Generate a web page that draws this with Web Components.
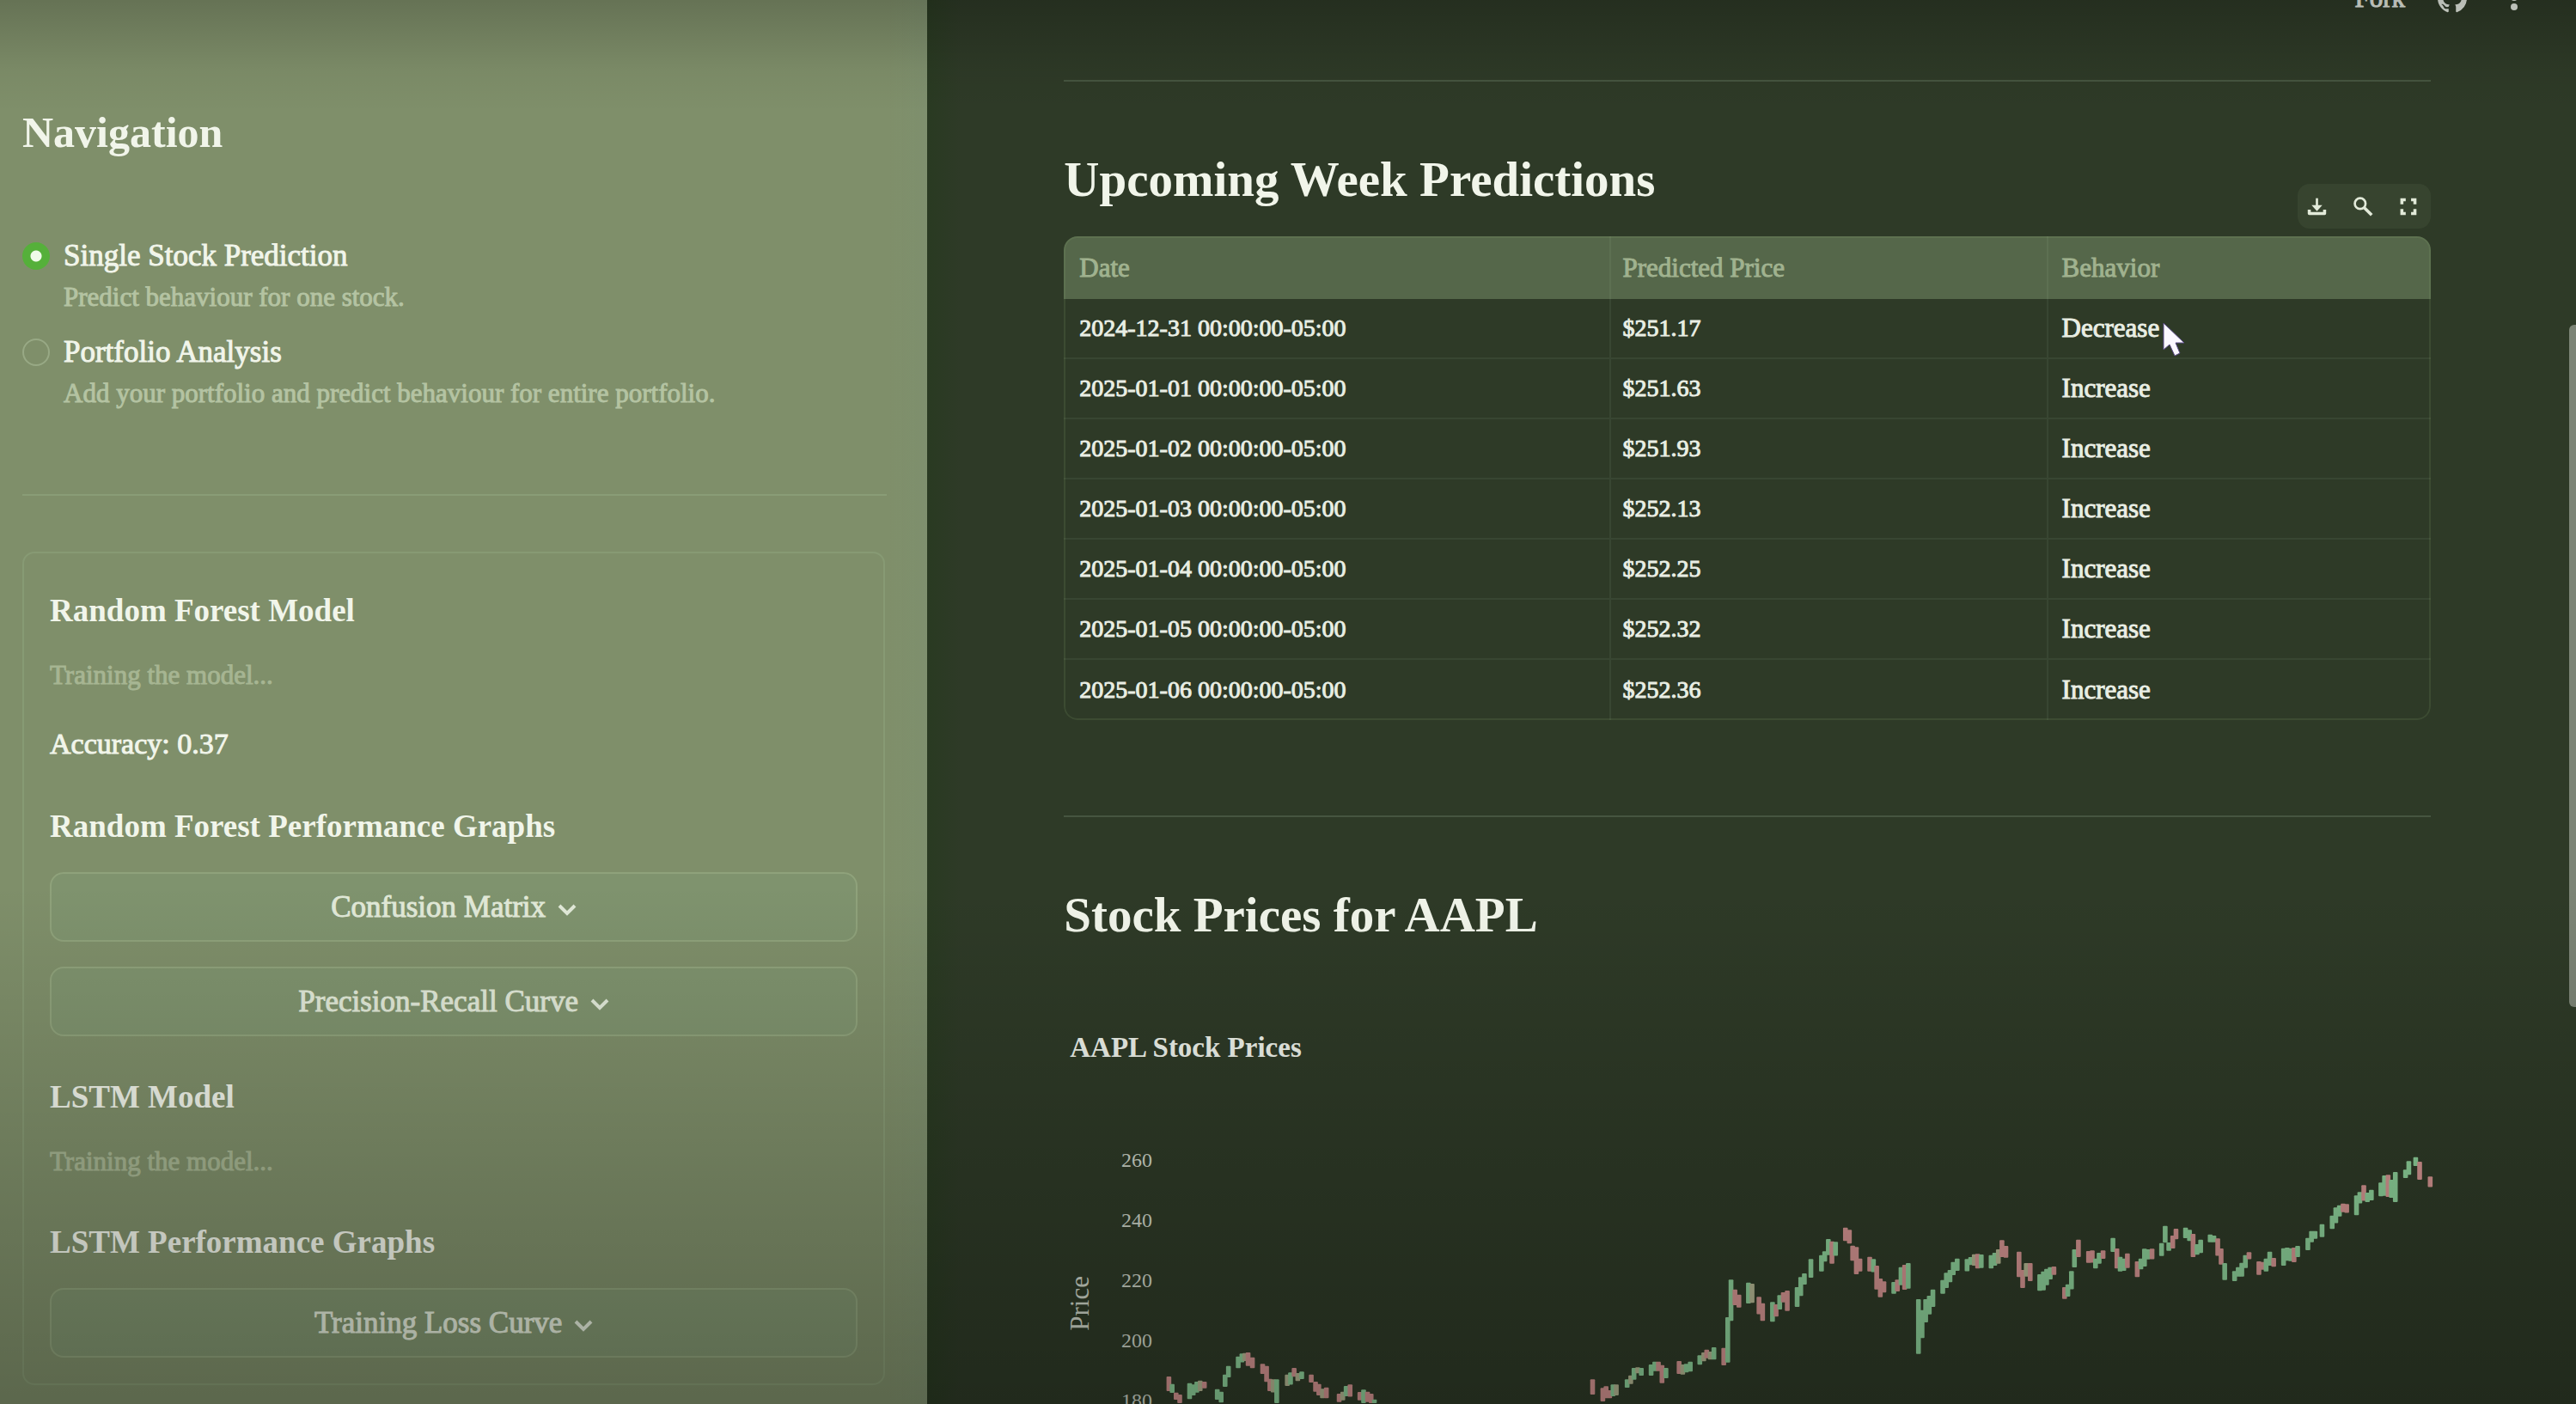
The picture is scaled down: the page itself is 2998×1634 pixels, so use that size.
<!DOCTYPE html>
<html lang="en">
<head>
<meta charset="utf-8">
<title>Stock Prediction</title>
<style>
  :root {
    --text: #f1f5ea;
    --soft: #e1e9d8;
    --muted: #b4c3a2;
    --side: #7f8f6a;
    --main: #2e3a27;
    --side-line: #899d76;
    --main-line: #465540;
  }
  html, body { margin: 0; height: 100%; background: var(--main); }
  body { font-family: "Liberation Serif", "Times New Roman", serif; color: var(--text); -webkit-text-stroke: 1px; }
  h2, h3 { -webkit-text-stroke: 0; }
</style>
</head>
<body>
<app-shell>
  <side-panel slot="side">
    <page-choice></page-choice>
    <model-card>
      <h3>Random Forest Model</h3>
      <p class="note">Training the model...</p>
      <p>Accuracy: 0.37</p>
      <h3>Random Forest Performance Graphs</h3>
      <pop-button>Confusion Matrix</pop-button>
      <pop-button>Precision-Recall Curve</pop-button>
      <h3>LSTM Model</h3>
      <p class="note">Training the model...</p>
      <h3>LSTM Performance Graphs</h3>
      <pop-button>Training Loss Curve</pop-button>
    </model-card>
  </side-panel>
  <top-bar></top-bar>
  <page-section>
    <h2 slot="title">Upcoming Week Predictions</h2>
    <table-tools slot="tools"></table-tools>
    <prediction-table></prediction-table>
  </page-section>
  <page-section>
    <h2 slot="title">Stock Prices for AAPL</h2>
    <price-chart></price-chart>
  </page-section>
</app-shell>

<script>
const define = (name, html, setup) => {
  const tpl = document.createElement('template');
  tpl.innerHTML = html;
  customElements.define(name, class extends HTMLElement {
    constructor() {
      super();
      const root = this.attachShadow({ mode: 'open' });
      root.append(tpl.content.cloneNode(true));
      if (setup) setup(root, this);
    }
  });
};

define('app-shell', `
<style>
  :host { display: grid; grid-template-columns: 36% 1fr; height: 100vh; overflow: hidden; position: relative; }
  aside { background: linear-gradient(to right, transparent 96%, rgba(120,145,125,.18)), var(--side); overflow: hidden; }
  main { background: linear-gradient(to right, rgba(38,58,30,.6), transparent 2%), var(--main); overflow: hidden; min-width: 0; }
  .shade { position: absolute; inset: 0; pointer-events: none;
    background: linear-gradient(to bottom, rgba(0,0,0,.2), rgba(0,0,0,.04) 5%, transparent 8%, transparent 63%, rgba(0,0,0,.28)); }
  .thumb { position: absolute; right: 0; top: 378px; width: 8px; height: 794px; border-radius: 6px 0 0 6px; background: #7c8476; }
  .pointer { position: absolute; left: 2516px; top: 374px; width: 28px; height: 42px; }
</style>
<aside><slot name="side"></slot></aside>
<main><slot></slot></main>
<div class="thumb"></div>
<div class="shade"></div>
<svg class="pointer" viewBox="0 0 28 42"><path d="M2 2V33L9 27L15 40L21 37L16 25H26Z" fill="#fbf8ff" stroke="#5a4a86" stroke-width="1" stroke-linejoin="round"/></svg>
`);

define('side-panel', `
<style>
  :host { display: block; padding: 124px 47px 0 26px; }
  h1 { margin: 0 0 89px; font-size: 50px; line-height: 60px; font-weight: 700; -webkit-text-stroke: 0; }
</style>
<h1>Navigation</h1>
<slot></slot>
`);

define('page-choice', `
<style>
  :host { display: block; padding-bottom: 94px; margin-bottom: 65px; border-bottom: 2px solid var(--side-line); }
  fieldset { border: 0; margin: 0; padding: 0; display: grid; gap: 16px; }
  label { display: grid; grid-template-columns: 32px 1fr; column-gap: 16px; align-items: center; }
  input { appearance: none; box-sizing: border-box; margin: 0; width: 32px; height: 32px; border-radius: 50%; border: 2px solid #98a985; background: transparent; }
  input:checked { border: 0; background: radial-gradient(circle, #effbe8 0 6px, #55b03a 7px); }
  b { font-weight: 400; font-size: 35px; line-height: 50px; color: var(--text); }
  small { grid-column: 2; font-size: 31px; line-height: 46px; color: var(--muted); }
</style>
<fieldset>
  <label><input type="radio" name="page" checked><b>Single Stock Prediction</b><small>Predict behaviour for one stock.</small></label>
  <label><input type="radio" name="page"><b>Portfolio Analysis</b><small>Add your portfolio and predict behaviour for entire portfolio.</small></label>
</fieldset>
`);

define('model-card', `
<style>
  :host { display: flex; flex-direction: column; border: 2px solid #879a74; border-radius: 14px; padding: 43px 30px 30px; margin-right: 2px; }
  ::slotted(*) { margin: 0; }
  ::slotted(h3) { font-size: 37px; line-height: 48px; font-weight: 700; margin-top: 47px; }
  ::slotted(h3:first-child) { margin-top: 0; }
  ::slotted(p) { font-size: 34px; line-height: 50px; margin-top: 32px; }
  ::slotted(p.note) { font-size: 31px; line-height: 46px; margin-top: 28px; color: #a6b592; }
  ::slotted(pop-button) { margin-top: 29px; }
</style>
<slot></slot>
`);

define('pop-button', `
<style>
  :host { display: block; }
  button { width: 100%; height: 81px; box-sizing: border-box; display: flex; align-items: center; justify-content: center; gap: 14px;
    font: inherit; font-size: 35px; line-height: 50px; color: var(--soft); background: rgba(128,160,122,.26); border: 2px solid #8fa27b; border-radius: 16px; padding: 0; }
  svg { width: 22px; height: 22px; margin-top: 6px; }
</style>
<button type="button"><slot></slot><svg viewBox="0 0 22 22" fill="none" stroke="currentColor" stroke-width="4"><path d="M2 6L11 15L20 6"/></svg></button>
`);

define('top-bar', `
<style>
  :host { display: flex; justify-content: flex-end; align-items: center; gap: 38px; height: 44px; margin-top: -24px; padding-right: 55px; }
  button { border: 0; padding: 0; background: none; font: inherit; font-size: 31px; line-height: 44px; color: #e6ebe2; display: flex; }
  svg { width: 34px; height: 34px; fill: currentColor; }
</style>
<button type="button">Fork</button>
<button type="button" aria-label="Source"><svg viewBox="0 0 16 16"><path d="M8 0C3.58 0 0 3.58 0 8c0 3.54 2.29 6.53 5.47 7.59.4.07.55-.17.55-.38 0-.19-.01-.82-.01-1.49-2.01.37-2.53-.49-2.69-.94-.09-.23-.48-.94-.82-1.13-.28-.15-.68-.52-.01-.53.63-.01 1.08.58 1.23.82.72 1.21 1.87.87 2.33.66.07-.52.28-.87.51-1.07-1.78-.2-3.64-.89-3.64-3.95 0-.87.31-1.59.82-2.15-.08-.2-.36-1.02.08-2.12 0 0 .67-.21 2.2.82.64-.18 1.32-.27 2-.27s1.36.09 2 .27c1.53-1.04 2.2-.82 2.2-.82.44 1.1.16 1.92.08 2.12.51.56.82 1.27.82 2.15 0 3.07-1.87 3.75-3.65 3.95.29.25.54.73.54 1.48 0 1.07-.01 1.93-.01 2.2 0 .21.15.46.55.38A8.01 8.01 0 0 0 16 8c0-4.42-3.58-8-8-8z"/></svg></button>
<button type="button" aria-label="Menu"><svg viewBox="0 0 34 34"><circle cx="17" cy="5" r="4"/><circle cx="17" cy="16" r="4"/><circle cx="17" cy="27" r="4"/></svg></button>
`);

define('page-section', `
<style>
  :host { display: block; margin: 73px 169px 0 159px; }
  :host(:last-of-type) { margin-top: 111px; }
  hr { border: 0; height: 2px; margin: 0 0 79px; background: var(--main-line); }
  header { display: flex; justify-content: space-between; align-items: flex-start; }
  ::slotted(h2) { margin: 0; font-size: 57px; line-height: 70px; font-weight: 700; }
  ::slotted(table-tools) { margin: 40px 0 9px; }
</style>
<hr>
<header><slot name="title"></slot><slot name="tools"></slot></header>
<slot></slot>
`);

define('table-tools', `
<style>
  :host { display: flex; align-items: center; gap: 28px; height: 52px; padding: 0 14px 0 10px; border-radius: 14px; background: rgba(70,85,60,.4); }
  button { border: 0; padding: 0; background: none; display: flex; color: #e2ead9; }
  svg { width: 25px; height: 25px; fill: none; stroke: currentColor; stroke-width: 4; }
</style>
<button type="button" aria-label="Download"><svg viewBox="0 0 28 28"><path d="M14 3V15" stroke-width="3"/><path d="M7 12H21L14 20Z" fill="currentColor" stroke="none"/><path d="M4 18V23H24V18" stroke-linejoin="round"/></svg></button>
<button type="button" aria-label="Search"><svg viewBox="0 0 28 28"><circle cx="11" cy="10" r="7" stroke-width="3"/><path d="M16 15L26 25"/></svg></button>
<button type="button" aria-label="Fullscreen"><svg viewBox="0 0 28 28"><path d="M6 11V5H11M18 5H23V11M23 17V23H18M11 23H6V17"/></svg></button>
`);

define('prediction-table', `
<style>
  :host { display: block; position: relative; border-radius: 16px; overflow: hidden; }
  :host::after { content: ""; position: absolute; inset: 0; border: 2px solid rgba(135,165,115,.16); border-radius: 16px; pointer-events: none; }
  table { width: 100%; border-collapse: separate; border-spacing: 0; table-layout: fixed; font-size: 28px; }
  th, td { box-sizing: border-box; height: 70px; padding: 0 16px; text-align: left; font-weight: 400; border-bottom: 2px solid #384632; border-right: 2px solid #384632; }
  th:first-child, td:first-child { width: 40%; padding-left: 18px; }
  th:nth-child(2), td:nth-child(2) { width: 32%; padding-left: 14px; }
  td:nth-child(3) { font-size: 31px; }
  th:last-child, td:last-child { border-right: 0; }
  th { height: 73px; font-size: 31px; color: #a0b28f; background: #55674a; border-color: #5d7052; border-bottom: 0; }
  tr:last-child td { border-bottom: 0; }
  td { color: #e9eee4; }
</style>
<table>
  <thead><tr><th>Date</th><th>Predicted Price</th><th>Behavior</th></tr></thead>
  <tbody></tbody>
</table>
`, root => {
  const rows = [
    ['2024-12-31', '251.17', 'Decrease'], ['2025-01-01', '251.63', 'Increase'],
    ['2025-01-02', '251.93', 'Increase'], ['2025-01-03', '252.13', 'Increase'],
    ['2025-01-04', '252.25', 'Increase'], ['2025-01-05', '252.32', 'Increase'],
    ['2025-01-06', '252.36', 'Increase']
  ];
  root.querySelector('tbody').innerHTML = rows.map(([d, p, b]) =>
    `<tr><td>${d} 00:00:00-05:00</td><td>$${p}</td><td>${b}</td></tr>`).join('');
});

define('price-chart', `
<style>
  :host { display: block; padding-top: 97px; }
  h4 { margin: 0 0 0 7px; font-size: 33px; line-height: 44px; font-weight: 700; color: #eef2ea; -webkit-text-stroke: 0; }
  svg { display: block; width: 100%; overflow: visible; font-family: inherit; fill: #ccd3c6; }
  text { stroke: #ccd3c6; stroke-width: 0; }
  .g { fill: #8ccf98; } .r { fill: #d39390; } .m { fill: #b3b591; }
</style>
<h4>AAPL Stock Prices</h4>
<svg viewBox="0 0 1591 420">
  <text font-size="31" text-anchor="middle" transform="translate(29 276) rotate(-90)">Price</text>
  <g font-size="24" text-anchor="end">
    <text x="103" y="117">260</text><text x="103" y="187">240</text><text x="103" y="257">220</text><text x="103" y="327">200</text><text x="103" y="397">180</text>
  </g>
  <g id="candles"></g>
</svg>
`, root => {
  // Each run of candles starts at its own x; a candle is: colour, x, high, low (in thirds of a unit).
  const runs = [
    [-19, `r370,852,900 g380,878,906 r392,908,930 r403,915,942
      g433,875,928 g444,880,915 g455,870,905 m465,866,900 r478,870,890
      g517,896,930 g529,905,940 g541,845,885 g551,815,852
      g581,782,820 g592,772,800 m601,770,795 r611,768,812 r624,785,820
      r655,808,840 r667,815,868 r677,860,900 m687,862,905 g698,862,942
      m730,845,882 g740,838,878 r751,822,850 m762,840,865 g774,835,858
      r803,845,870 r816,870,902 r826,878,915 m837,895,925 r849,890,925
      r888,912,938 m899,905,932 g909,885,918 r921,880,920
      r951,906,932 g962,898,942 r974,905,938 r985,912,942 g995,932,942`],
    [581, `r91,862,912 r122,892,936 r132,886,925 r143,900,925 g153,880,918 m163,880,915
      g196,862,888 m207,848,875 g217,822,860 m228,820,838 g239,822,846
      g269,810,846 g280,800,830 r291,800,830 r302,812,872 g314,822,855
      r354,798,840 m365,810,842 g376,808,835 g388,800,832
      g417,778,808 m429,768,796 r438,758,785 m449,765,790 g460,750,790
      r490,752,810 g502,645,800 g512,514,655 r524,548,600 r536,566,608
      g565,524,594 m576,528,592 r597,574,632 r608,596,655
      g638,592,658 r649,600,640 g660,568,615 r671,558,590 r683,552,620
      g713,540,606 g724,505,568 g735,492,528 g755,442,504
      g787,428,482 g797,415,448 g808,372,425 r819,380,455 g830,382,428
      r860,332,376 r872,340,385 r882,395,445 r893,400,492 r904,440,482
      r934,434,482 g945,442,485 r955,465,545 r966,510,572 r977,520,556
      g1007,522,560 r1018,514,552 g1029,470,530 r1040,462,546 g1051,456,542
      g1082,582,770 g1093,620,715 g1104,582,660 g1115,570,632 g1126,548,606
      g1156,515,560 g1167,490,540 g1178,480,520 g1188,452,495 g1200,440,480
      g1230,442,482 g1241,435,460 m1252,425,462 r1262,424,472 g1273,426,470
      g1303,428,472 g1314,420,462 m1325,408,455 r1336,376,432 r1348,396,434
      r1388,416,502 r1399,480,540 m1410,456,500 r1422,456,516
      g1451,495,550 g1462,485,548 g1472,476,530 g1483,470,510 r1494,468,494`],
    [1161, `r11,540,578 g21,530,570 g32,484,545 g41,408,468 r53,374,432
      r84,414,452 r95,412,452 g105,440,472 g116,420,455 r128,412,438
      g158,368,414 r170,405,472 g180,434,482 g191,440,480 r202,422,470
      r232,450,502 g243,440,475 g254,406,465 g264,408,440 r277,406,440
      g306,386,428 g317,326,382 g328,384,410 r340,360,402 r350,336,370
      g379,332,366 g391,340,376 r402,354,432 g414,390,424 g425,374,418
      g454,356,380 g465,360,380 r477,370,428 r487,405,458 g498,456,512
      g528,484,516 g539,470,500 g550,455,500 g561,428,470 r572,418,440
      r602,450,494 r613,452,476 g624,440,482 g635,416,462 r647,438,466
      g677,404,462 g688,402,445 g699,404,446 r709,402,450 g720,396,432
      g751,368,408 g762,344,380 g773,344,368 g794,320,362
      g825,290,334 g836,262,314 g847,254,290 r858,248,275 r869,250,278
      g899,220,286 g909,208,245 r921,184,236 g932,210,240 g944,200,234
      g973,175,220 g984,150,218 r995,148,222 g1005,165,225 g1017,138,240
      g1048,130,156 g1058,100,145 g1079,86,114 r1091,102,162 r1123,154,188`]
  ];
  root.getElementById('candles').innerHTML = runs.map(([start, list]) =>
    list.trim().split(/\s+/).map(c => {
      const [x, high, low] = c.slice(1).split(',').map(Number);
      return `<rect class="${c[0]}" x="${(start + x / 2.613 - 3).toFixed(1)}" y="${(77 + high / 3).toFixed(1)}" width="5.6" height="${((low - high) / 3 + 1).toFixed(1)}" rx="1"/>`;
    }).join('')).join('');
});
</script>
</body>
</html>
